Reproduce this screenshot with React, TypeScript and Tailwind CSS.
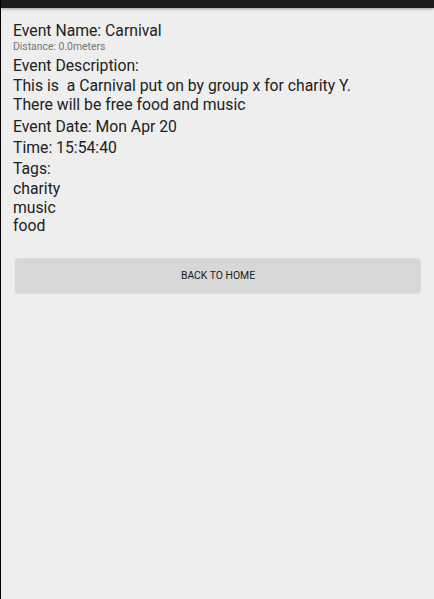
const tags = ["charity", "music", "food"];

export default function App() {
  return (
    <div
      className="flex h-[599px] w-[434px] flex-col overflow-hidden border-l border-black bg-[#eeeeee] text-[#212121]"
      style={{ fontFamily: "Roboto, 'Liberation Sans', sans-serif" }}
    >
      <div className="h-2 w-full shrink-0 bg-[#1c1c1c] shadow-[0_1px_3px_rgba(0,0,0,0.35)]" />
      <div className="flex flex-col px-3 pt-3 text-[15.75px]">
        <p className="leading-[21px]">Event Name: Carnival</p>
        <p className="text-[10.4px] leading-3 text-[#757575]">Distance: 0.0meters</p>
        <p className="mt-0.5 leading-[21px]">Event Description:</p>
        <p className="leading-[19px]">
          This is&nbsp; a Carnival put on by group x for charity Y.
          <br />
          There will be free food and music
        </p>
        <p className="mt-0.5 leading-[21px]">Event Date: Mon Apr 20</p>
        <p className="leading-[21px]">Time: 15:54:40</p>
        <p className="leading-[21px]">Tags:</p>
        <div className="mt-px flex flex-col">
          {tags.map((t) => (
            <p key={t} className="leading-[18.5px]">
              {t}
            </p>
          ))}
        </div>
      </div>
      <div className="mt-[22px] pl-[14px] pr-[13px]">
        <button className="flex h-[35px] w-full items-center justify-center rounded-sm bg-[#d6d7d7] pt-0.5 text-[10.4px] text-[#212121] shadow-[0_1px_1px_rgba(0,0,0,0.08)]">
          BACK TO HOME
        </button>
      </div>
    </div>
  );
}
